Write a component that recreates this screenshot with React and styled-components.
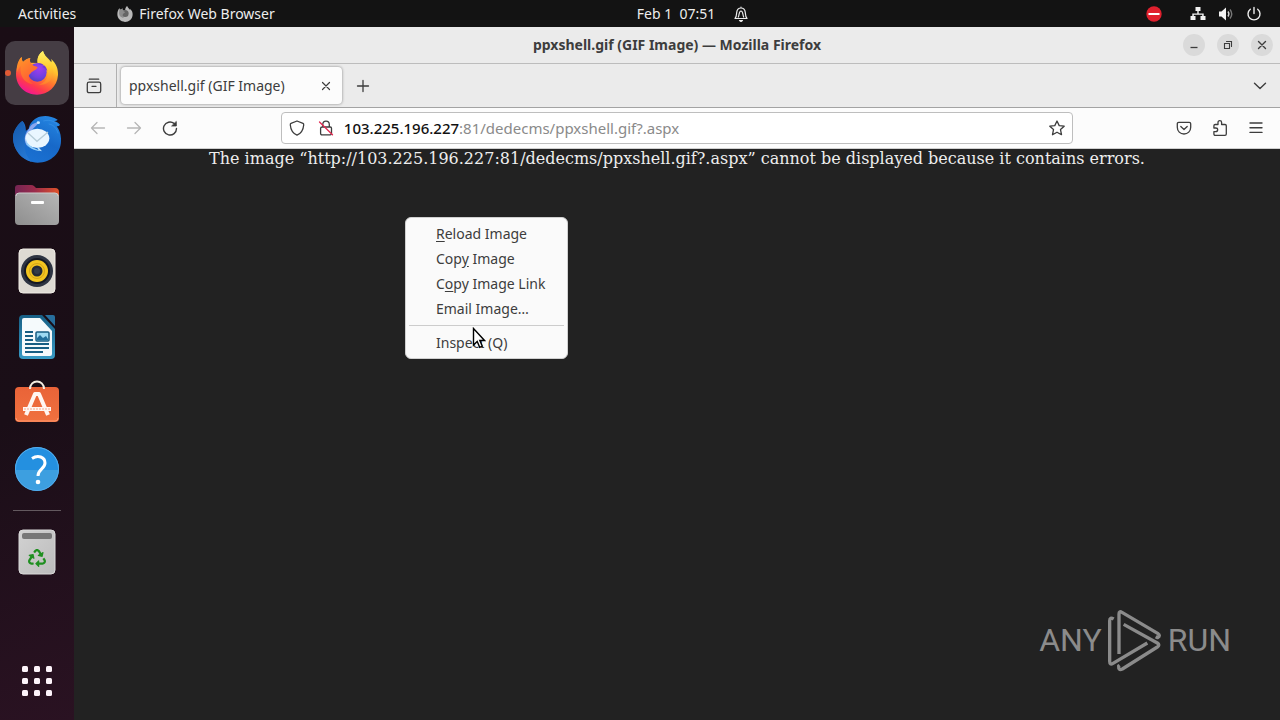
import React from "react";
import styled, { createGlobalStyle } from "styled-components";
import { FaRecycle } from "react-icons/fa";

const UI_FONT = `"Noto Sans", "Open Sans", sans-serif`;

const GlobalStyle = createGlobalStyle`
  * {
    box-sizing: border-box;
  }

  body {
    margin: 0;
    background: #222222;
    font-family: ${UI_FONT};
    font-size: 14px;
  }

  button,
  input {
    font: inherit;
    color: inherit;
  }
`;

const Desktop = styled.div`
  display: flex;
  flex-direction: column;
  min-height: 100vh;
`;

const TopBar = styled.header`
  display: grid;
  grid-template-columns: 6fr auto 5fr;
  align-items: center;
  height: 27px;
  background: #131313;
  color: #ededed;
`;

const TopGroup = styled.div`
  display: flex;
  align-items: center;
  justify-content: ${props => (props.$end ? "flex-end" : "flex-start")};
  gap: ${props => props.$gap || 0}px;
  padding: 0 18px;
`;

const TopButton = styled.button`
  display: flex;
  align-items: center;
  gap: ${props => props.$gap || 0}px;
  padding: 0;
  border: 0;
  background: none;
  line-height: 20px;
  white-space: pre;

  svg {
    display: block;
  }
`;

const Workspace = styled.div`
  display: flex;
  flex: 1;
`;

const Dock = styled.nav`
  display: flex;
  flex-direction: column;
  align-items: center;
  gap: 2px;
  width: 74px;
  flex-shrink: 0;
  padding: 14px 0 7px;
  background: linear-gradient(160deg, #1a0d15 0%, #1a0e17 55%, #2a1222 100%);
`;

const DockButton = styled.button`
  position: relative;
  display: flex;
  align-items: center;
  justify-content: center;
  width: 64px;
  height: 64px;
  padding: 0;
  border: 0;
  border-radius: 10px;
  background: ${props => (props.$active ? "#453d44" : "transparent")};
`;

const RunningDot = styled.span`
  position: absolute;
  left: 0;
  width: 6px;
  height: 6px;
  border-radius: 50%;
  background: #e05a34;
`;

const DockDivider = styled.hr`
  width: 48px;
  height: 1px;
  margin: 7px 0;
  border: 0;
  background: #63595f;
`;

const Filler = styled.div`
  flex: 1;
`;

const Window = styled.main`
  display: flex;
  flex: 1;
  flex-direction: column;
  min-width: 0;
`;

const TitleBar = styled.div`
  display: grid;
  grid-template-columns: 1fr auto 1fr;
  align-items: center;
  height: 37px;
  padding: 0 7px;
  border-bottom: 1px solid #bcbcbc;
  background: #ebebeb;
`;

const Title = styled.h1`
  grid-column: 2;
  margin: 0;
  font-size: 14px;
  font-weight: 700;
  line-height: 20px;
  color: #3d3d3d;
`;

const WindowButtons = styled.div`
  display: flex;
  justify-content: flex-end;
  gap: 12px;
`;

const WindowButton = styled.button`
  display: flex;
  align-items: center;
  justify-content: center;
  width: 22px;
  height: 22px;
  padding: 0;
  border: 0;
  border-radius: 50%;
  background: #dadada;
  color: #3d3d3d;
`;

const TabStrip = styled.div`
  display: flex;
  align-items: center;
  height: 44px;
  padding-right: 4px;
  border-bottom: 1px solid #a3a3a3;
  background: #ebebeb;
`;

const RecentCell = styled.div`
  display: flex;
  align-items: center;
  align-self: stretch;
  padding: 0 6px 0 4px;
  border-right: 1px solid #b0b0b0;
`;

const Tab = styled.div`
  display: flex;
  align-items: center;
  width: 221px;
  height: 37px;
  margin: 0 5px 0 4px;
  padding: 0 4px 0 8px;
  border-radius: 4px;
  background: #fcfcfc;
  box-shadow: 0 0 3px rgba(0, 0, 0, 0.45);
`;

const TabLabel = styled.span`
  flex: 1;
  overflow: hidden;
  line-height: 20px;
  white-space: nowrap;
  color: #3d3d3d;
`;

const IconButton = styled.button`
  display: flex;
  align-items: center;
  justify-content: center;
  width: ${props => props.$size || 32}px;
  height: ${props => props.$size || 32}px;
  padding: 0;
  border: 0;
  border-radius: 4px;
  background: none;
  color: ${props => (props.disabled ? "#b6b6b6" : "#3d3d3d")};
`;

const NavBar = styled.div`
  display: flex;
  align-items: center;
  height: 41px;
  padding: 0 8px;
  border-bottom: 1px solid #cfcfcf;
  background: #fcfcfc;
`;

const NavGroup = styled.div`
  display: flex;
  gap: 4px;
`;

const Spring = styled.div`
  flex: 12;
`;

const AddressBar = styled.form`
  display: flex;
  flex: 100;
  align-items: center;
  height: 32px;
  border: 1px solid #bebebe;
  border-radius: 4px;
  background: #ffffff;
  font-size: 15px;
`;

const Host = styled.label`
  margin-left: 4px;
  font-weight: 500;
  line-height: 20px;
  color: #111111;
`;

const PathInput = styled.input`
  flex: 1;
  min-width: 0;
  padding: 0;
  border: 0;
  outline: 0;
  background: none;
  line-height: 20px;
  color: #8a8a8a;
`;

const Page = styled.section`
  position: relative;
  flex: 1;
  background: #222222;
`;

const ErrorText = styled.p`
  margin: 0;
  font-family: "DejaVu Serif", serif;
  font-size: 16px;
  line-height: 19px;
  text-align: center;
  color: #eeeeee;
`;

const ContextMenu = styled.div`
  position: absolute;
  top: 68px;
  left: 331px;
  width: 163px;
  padding: 3px;
  border: 1px solid #d0d0d0;
  border-radius: 6px;
  background: #fafafa;
`;

const MenuItem = styled.button`
  display: block;
  width: 100%;
  height: 25px;
  padding: 0 0 0 27px;
  border: 0;
  background: none;
  line-height: 24px;
  text-align: left;
  white-space: nowrap;
  color: #3d3d3d;

  u {
    text-underline-offset: 2px;
  }
`;

const MenuDivider = styled.hr`
  height: 1px;
  margin: 4px 0;
  border: 0;
  background: #cccccc;
`;

const Pointer = styled.svg`
  position: absolute;
  top: 109px;
  left: 66px;
`;

const Watermark = styled.div`
  position: absolute;
  right: 49px;
  bottom: 48px;
  display: flex;
  align-items: center;
  gap: 5px;
  font-family: Roboto, "Liberation Sans", sans-serif;
  font-size: 32px;
  line-height: 64px;
  color: #8b8b8b;
`;

const FirefoxIcon = () => (
  <svg width="44" height="44" viewBox="0 0 132 132" aria-hidden="true">
    <defs>
      <linearGradient id="fxBody" x1="0.8" y1="0.05" x2="0.3" y2="1">
        <stop offset="0" stopColor="#fff44f" />
        <stop offset="0.3" stopColor="#ffc22e" />
        <stop offset="0.55" stopColor="#ff7b2d" />
        <stop offset="0.78" stopColor="#ff3a4c" />
        <stop offset="1" stopColor="#f0139b" />
      </linearGradient>
      <linearGradient id="fxFlame" x1="0.5" y1="0" x2="0.5" y2="1">
        <stop offset="0" stopColor="#fff36a" />
        <stop offset="0.5" stopColor="#ffcb2f" />
        <stop offset="1" stopColor="#ff7b2d" />
      </linearGradient>
      <linearGradient id="fxEar" x1="0" y1="0" x2="0.6" y2="1">
        <stop offset="0" stopColor="#ff9a26" />
        <stop offset="1" stopColor="#ff5a35" />
      </linearGradient>
      <radialGradient id="fxGlobe" cx="0.6" cy="0.3" r="0.8">
        <stop offset="0" stopColor="#a03df0" />
        <stop offset="0.6" stopColor="#7040df" />
        <stop offset="1" stopColor="#4b3fb5" />
      </radialGradient>
    </defs>
    <path d="M20 18 C20 25 21 29 24 33 C31 26 38 22 46 21 C43 26 43 30 45 35 L68 36 C66 22 72 8 84 0 C87 14 100 20 109 34 C110 30 110 27 108 23 C124 38 130 54 129 72 C127 107 99 131 66 131 C30 131 3 104 3 69 C3 58 6 48 10 42 C10 32 14 24 20 18Z" fill="url(#fxBody)" />
    <path d="M84 0 C70 9 66 22 68 36 C82 36 96 46 98 64 C100 82 90 95 72 101 C97 104 115 86 115 64 C116 36 90 24 84 0Z" fill="url(#fxFlame)" />
    <circle cx="67" cy="64" r="28" fill="url(#fxGlobe)" />
    <path d="M68 36 C82 36 95 45 97 61 C92 54 88 50 82 48 C85 46 86 44 86 42 C80 43 73 42 68 36Z" fill="#713bd4" />
    <path d="M20 18 C20 25 21 29 24 33 C31 26 38 22 46 21 C43 30 46 36 54 43 C58 46 66 47 68 49 C67 55 59 58 52 62 C48 64 47 68 42 72 C38 80 43 91 54 99 C35 99 18 82 17 60 C16 53 18 48 21 43 C14 48 9 54 6 64 C3 46 9 28 20 18Z" fill="url(#fxEar)" />
  </svg>
);

const FirefoxMono = () => (
  <svg width="16" height="16" viewBox="0 0 132 132" aria-hidden="true">
    <path d="M20 18 L26 31 L46 21 L45 35 L68 36 C66 22 72 8 84 0 C87 14 100 20 109 34 L108 23 C124 38 130 54 129 72 C127 107 99 131 66 131 C30 131 3 104 3 69 C3 48 8 30 20 18Z" fill="#b9b9b9" />
    <circle cx="67" cy="62" r="29" fill="#666666" />
    <path d="M20 18 L26 31 L46 21 C43 34 52 45 68 49 C67 57 50 58 48 70 C44 84 48 92 58 98 C30 98 12 78 18 48Z" fill="#8c8c8c" />
  </svg>
);

const ThunderbirdIcon = () => (
  <svg width="48" height="48" viewBox="0 0 144 144" aria-hidden="true">
    <defs>
      <linearGradient id="tbBody" x1="0.8" y1="0" x2="0.3" y2="1">
        <stop offset="0" stopColor="#2586e2" />
        <stop offset="0.5" stopColor="#1768c8" />
        <stop offset="1" stopColor="#1b72d3" />
      </linearGradient>
      <linearGradient id="tbWing" x1="0" y1="0" x2="0.4" y2="1">
        <stop offset="0" stopColor="#1458aa" />
        <stop offset="1" stopColor="#2577d2" />
      </linearGradient>
    </defs>
    <path d="M28 18 C13 30 0 48 0 70 C2 112 34 143 74 143 C115 143 144 113 144 78 C145 60 139 44 131 34 C136 34 139 32 141 29 C136 23 129 20 123 18 C127 18 131 17 134 14 C112 1 89 0 71 9 C56 17 50 28 47 41 L38 48 C39 38 37 26 28 18Z" fill="url(#tbBody)" />
    <path d="M28 18 C13 30 0 48 0 70 C2 105 25 132 57 141 C42 126 32 107 36 86 C42 63 37 31 28 18Z" fill="url(#tbWing)" />
    <path d="M48 41 C55 26 66 24 77 22 C71 34 62 38 53 48 C38 62 38 82 46 96 C29 80 34 56 48 41Z" fill="#8ba7ef" />
    <ellipse cx="73" cy="70" rx="36" ry="29" fill="#e9f6ff" />
    <path d="M39 72 C41 89 60 100 85 108 C75 108 65 106 56 101 C43 94 36 84 39 72Z" fill="#95d0fa" />
    <path d="M72 96 C74 104 78 107 87 109 L76 96Z" fill="#c6e7ff" />
    <path d="M45 54 L72 79 L105 51" fill="none" stroke="#b7cdd8" strokeWidth="4" />
    <ellipse cx="76" cy="23" rx="5" ry="4" fill="#c7e8ff" />
    <path d="M91 18 C111 12 127 20 136 32 M107 27 C123 29 132 42 135 55" fill="none" stroke="#4ba2f0" strokeWidth="3" opacity="0.4" />
  </svg>
);

const FilesIcon = () => (
  <svg width="46" height="42" viewBox="0 0 46 42" aria-hidden="true">
    <defs>
      <linearGradient id="filesBack" x1="0" y1="0" x2="1" y2="0">
        <stop offset="0" stopColor="#742553" />
        <stop offset="0.45" stopColor="#9b2b4b" />
        <stop offset="1" stopColor="#e0532a" />
      </linearGradient>
      <linearGradient id="filesFront" x1="0" y1="1" x2="1" y2="0">
        <stop offset="0" stopColor="#8e8e8e" />
        <stop offset="1" stopColor="#b6b6b6" />
      </linearGradient>
    </defs>
    <path d="M1 24V4Q1 1 4 1H17Q19 1 20 2L22 4H41Q45 4 45 8V24Z" fill="url(#filesBack)" />
    <rect x="1" y="9" width="44" height="32" rx="4" fill="url(#filesFront)" />
    <path d="M2 12Q2 9 5 9H41Q44 9 44 12" fill="none" stroke="#cccccc" />
    <rect x="17" y="17" width="13" height="3" rx="1" fill="#ffffff" />
  </svg>
);

const RhythmboxIcon = () => (
  <svg width="38" height="46" viewBox="0 0 38 46" aria-hidden="true">
    <rect x="1" y="1" width="36" height="44" rx="4" fill="#dedad3" stroke="#f0ece5" />
    <circle cx="19" cy="23" r="16" fill="#2e3442" />
    <circle cx="19" cy="23" r="13" fill="#151823" />
    <circle cx="19" cy="23" r="11" fill="#f3c51f" />
    <circle cx="19" cy="23" r="7.5" fill="none" stroke="#d5a41a" />
    <circle cx="19" cy="23" r="5.5" fill="#252a35" />
    <circle cx="19" cy="23" r="3" fill="#343b49" />
  </svg>
);

const WriterIcon = () => (
  <svg width="38" height="46" viewBox="0 0 38 46" aria-hidden="true">
    <defs>
      <linearGradient id="writer" x1="0" y1="0" x2="0" y2="1">
        <stop offset="0" stopColor="#175f85" />
        <stop offset="1" stopColor="#389bc5" />
      </linearGradient>
    </defs>
    <path d="M5 1H24L37 15V41Q37 45 33 45H5Q1 45 1 41V5Q1 1 5 1Z" fill="url(#writer)" />
    <path d="M27 1H35Q37 1 37 3V12Z" fill="#276f9d" />
    <path d="M6 4H22L34 17V40Q34 42 32 42H6Q4 42 4 40V6Q4 4 6 4Z" fill="#f5fafc" />
    <path d="M7 18H15M7 22H15M7 26H15M7 30H31M7 34H31M7 38H25" stroke="#175e83" strokeWidth="2" />
    <rect x="18" y="18" width="13" height="9" rx="1" fill="#9edaf2" stroke="#175e83" strokeWidth="1.5" />
    <path d="M19 26V24L22 21L25 24L28 22L30 25V26Z" fill="#226f9b" />
  </svg>
);

const SoftwareIcon = () => (
  <svg width="46" height="46" viewBox="0 2 46 46" aria-hidden="true">
    <defs>
      <linearGradient id="software" x1="0" y1="0" x2="0" y2="1">
        <stop offset="0" stopColor="#e96338" />
        <stop offset="1" stopColor="#f0713f" />
      </linearGradient>
    </defs>
    <rect x="1" y="9" width="44" height="35" rx="4" fill="url(#software)" />
    <path d="M2 40Q2 43 5 43H41Q44 43 44 40" fill="none" stroke="#ff9a70" />
    <path d="M16 11C16 1 30 1 30 11" fill="none" stroke="#f4eee2" strokeWidth="2" />
    <path d="M12 37L21 16H25L34 37M9 31H37" fill="none" stroke="#fff6f2" strokeWidth="4" strokeLinejoin="round" />
    <path d="M10 31H36" stroke="#f4a98d" strokeDasharray="2 1" />
  </svg>
);

const HelpIcon = () => (
  <svg width="46" height="46" viewBox="0 0 46 46" aria-hidden="true">
    <circle cx="23" cy="23" r="22" fill="#3d9fe0" />
    <path d="M1 24A22 22 0 0 1 45 24Z" fill="#2490e0" />
    <circle cx="23" cy="23" r="21.5" fill="none" stroke="#51acee" />
    <path d="M18 12.500C24 8.500 31 11 31 17C31 23 24 23 24 30" fill="none" stroke="#ffffff" strokeWidth="3" />
    <circle cx="24" cy="36" r="2.300" fill="#ffffff" />
  </svg>
);

const TrashIcon = () => (
  <svg width="38" height="46" viewBox="0 0 38 46" aria-hidden="true">
    <defs>
      <linearGradient id="trash" x1="0" y1="0" x2="1" y2="1">
        <stop offset="0" stopColor="#d2d2d2" />
        <stop offset="1" stopColor="#bcbcbc" />
      </linearGradient>
    </defs>
    <rect x="1" y="1" width="36" height="44" rx="4" fill="url(#trash)" stroke="#d9d9d9" />
    <rect x="4" y="4" width="30" height="6" rx="2" fill="#777777" />
    <FaRecycle x="10" y="20" size={18} color="#1f8f20" />
  </svg>
);

const AppsIcon = () => (
  <svg width="30" height="30" viewBox="0 0 30 30" fill="#fdf4fa" aria-hidden="true">
    {[0, 12, 24].map(y =>
      [0, 12, 24].map(x => <rect key={`${x}-${y}`} x={x} y={y} width="6" height="6" rx="1.500" />)
    )}
  </svg>
);

const Glyph = ({ size = 16, width = 1.3, children }) => (
  <svg
    width={size}
    height={size}
    viewBox="0 0 16 16"
    fill="none"
    stroke="currentColor"
    strokeWidth={width}
    strokeLinecap="round"
    strokeLinejoin="round"
    aria-hidden="true"
  >
    {children}
  </svg>
);

const dockApps = [
  { name: "Firefox Web Browser", Icon: FirefoxIcon, active: true },
  { name: "Thunderbird Mail", Icon: ThunderbirdIcon },
  { name: "Files", Icon: FilesIcon },
  { name: "Rhythmbox", Icon: RhythmboxIcon },
  { name: "LibreOffice Writer", Icon: WriterIcon },
  { name: "Ubuntu Software", Icon: SoftwareIcon },
  { name: "Help", Icon: HelpIcon }
];

const SystemBar = () => (
  <TopBar>
    <TopGroup $gap={41}>
      <TopButton>Activities</TopButton>
      <TopButton $gap={6}>
        <FirefoxMono />
        Firefox Web Browser
      </TopButton>
    </TopGroup>
    <TopButton $gap={18}>
      {"Feb 1  07:51"}
      <Glyph width={1.2}>
        <path d="M2 12.500H14C12.500 11 12.500 9.500 12.300 6.500C12 3.500 10.500 2 8 2C5.500 2 4 3.500 3.700 6.500C3.500 9.500 3.500 11 2 12.500ZM5.300 11C6.300 9.500 5.800 5 8 5C10.200 5 9.700 9.500 10.700 11M8 1V2" />
        <path d="M6.500 14.500H9.500L8 15.500Z" fill="currentColor" />
      </Glyph>
    </TopButton>
    <TopGroup $end $gap={28}>
      <TopButton aria-label="Recording">
        <svg width="16" height="16" viewBox="0 0 16 16">
          <circle cx="8" cy="8" r="7.700" fill="#e0202e" />
          <rect x="2.500" y="7" width="11" height="2" fill="#ffffff" />
        </svg>
      </TopButton>
      <TopButton $gap={12} aria-label="System">
        <svg width="16" height="16" viewBox="0 0 16 16" fill="#f2f2f2">
          <path d="M5.500 1H10.500V5H8.700V7.500H13.700V10H15.500V14H10.500V10H12.200V8.800H3.800V10H5.500V14H0.500V10H2.300V7.500H7.300V5H5.500Z" />
        </svg>
        <svg width="16" height="16" viewBox="0 0 16 16" fill="none">
          <path d="M1 5.500H3.500L8 1.500V14.500L3.500 10.500H1Z" fill="#f2f2f2" />
          <path d="M10 5.500Q11.800 8 10 10.500" stroke="#d0d0d0" strokeWidth="1.400" />
          <path d="M12 3.500Q15.500 8 12 12.500" stroke="#777777" strokeWidth="1.400" />
        </svg>
        <Glyph width={1.4}>
          <path d="M8 1.500V7.500M4.300 3.200A6 6 0 1 0 11.700 3.200" />
        </Glyph>
      </TopButton>
    </TopGroup>
  </TopBar>
);

const BrowserTabs = () => (
  <TabStrip>
    <RecentCell>
      <IconButton aria-label="Recent browsing">
        <Glyph>
          <path d="M3.300 1.200H12.700M3 4.200H13Q14.700 4.200 14.700 6V13Q14.700 14.700 13 14.700H3Q1.300 14.700 1.300 13V6Q1.300 4.200 3 4.200ZM6 8.300H10" />
        </Glyph>
      </IconButton>
    </RecentCell>
    <Tab>
      <TabLabel>ppxshell.gif (GIF Image)</TabLabel>
      <IconButton $size={24} aria-label="Close tab">
        <Glyph width={1.2}>
          <path d="M4.500 4.500L11.500 11.500M11.500 4.500L4.500 11.500" />
        </Glyph>
      </IconButton>
    </Tab>
    <IconButton aria-label="New tab">
      <Glyph>
        <path d="M8 2.500V13.500M2.500 8H13.500" />
      </Glyph>
    </IconButton>
    <Filler />
    <IconButton aria-label="List all tabs">
      <Glyph width={1.4}>
        <path d="M2.500 5.300L8 10.500L13.500 5.300" />
      </Glyph>
    </IconButton>
  </TabStrip>
);

const Navigation = () => (
  <NavBar>
    <NavGroup>
      <IconButton disabled aria-label="Back">
        <Glyph>
          <path d="M14.500 8H1.500M7 2.500L1.500 8L7 13.500" />
        </Glyph>
      </IconButton>
      <IconButton disabled aria-label="Forward">
        <Glyph>
          <path d="M1.500 8H14.500M9 2.500L14.500 8L9 13.500" />
        </Glyph>
      </IconButton>
      <IconButton aria-label="Reload">
        <Glyph width={1.4}>
          <path d="M14.500 8.500A6.500 6.500 0 1 1 12 3.400L13.500 5" />
          <path d="M14.300 1.800V6H10Z" fill="currentColor" strokeWidth="0.800" />
        </Glyph>
      </IconButton>
    </NavGroup>
    <Spring />
    <AddressBar onSubmit={event => event.preventDefault()}>
      <IconButton type="button" $size={30} aria-label="Tracking protection">
        <Glyph>
          <path d="M8 1L14 3.300Q14.800 3.600 14.700 5C14.300 9.500 12 13.500 8 15.200C4 13.500 1.700 9.500 1.300 5Q1.200 3.600 2 3.300Z" />
        </Glyph>
      </IconButton>
      <IconButton type="button" $size={28} aria-label="Connection not secure">
        <Glyph>
          <path d="M4.200 7H12.200Q13.500 7 13.500 8.300V13.500Q13.500 14.800 12.200 14.800H4Q2.600 14.800 2.600 13.500V8.300Q2.600 7 4.200 7ZM4.800 7V4.500Q4.800 1.200 8 1.200Q11.300 1.200 11.300 4.500V7" />
          <path d="M1.500 2L14.500 14.800" stroke="#e22850" />
        </Glyph>
      </IconButton>
      <Host htmlFor="address">103.225.196.227</Host>
      <PathInput id="address" defaultValue=":81/dedecms/ppxshell.gif?.aspx" />
      <IconButton type="button" $size={30} aria-label="Bookmark this page">
        <Glyph>
          <path d="M8 1L10.200 5.600L15.200 6.200L11.500 9.600L12.500 14.700L8 12.200L3.500 14.700L4.500 9.600L0.800 6.200L5.800 5.600Z" />
        </Glyph>
      </IconButton>
    </AddressBar>
    <Spring />
    <NavGroup>
      <IconButton aria-label="Save to Pocket">
        <Glyph>
          <path d="M2.800 2.300H13.200Q14.700 2.300 14.700 3.800V7.300C14.700 11.300 11.800 14 8 14C4.200 14 1.300 11.300 1.300 7.300V3.800Q1.300 2.300 2.800 2.300ZM4.800 6.500L8 9.500L11.200 6.500" />
        </Glyph>
      </IconButton>
      <IconButton aria-label="Extensions">
        <Glyph>
          <path d="M6 4.500V2.500Q6 0.700 7.800 0.700Q9.600 0.700 9.600 2.500V4.500H13Q14.300 4.500 14.300 5.800V14Q14.300 15.300 13 15.300H3.200Q1.900 15.300 1.900 14V11.600H3.700Q5.700 11.600 5.700 9.800Q5.700 8 3.700 8H1.900V5.800Q1.900 4.500 3.200 4.500Z" />
        </Glyph>
      </IconButton>
      <IconButton aria-label="Menu">
        <Glyph width={1.4}>
          <path d="M2 3H14M2 7.700H14M2 12.400H14" />
        </Glyph>
      </IconButton>
    </NavGroup>
  </NavBar>
);

const App = () => (
  <Desktop>
    <GlobalStyle />
    <SystemBar />
    <Workspace>
      <Dock>
        {dockApps.map(({ name, Icon, active }) => (
          <DockButton key={name} $active={active} aria-label={name}>
            {active && <RunningDot />}
            <Icon />
          </DockButton>
        ))}
        <DockDivider />
        <DockButton aria-label="Trash">
          <TrashIcon />
        </DockButton>
        <Filler />
        <DockButton aria-label="Show Applications">
          <AppsIcon />
        </DockButton>
      </Dock>
      <Window>
        <TitleBar>
          <Title>ppxshell.gif (GIF Image) — Mozilla Firefox</Title>
          <WindowButtons>
            <WindowButton aria-label="Minimize">
              <Glyph>
                <path d="M4.500 10.500H11.500" strokeLinecap="butt" />
              </Glyph>
            </WindowButton>
            <WindowButton aria-label="Restore">
              <Glyph width={1.1}>
                <path d="M4.500 6.500H9.500V11.500H4.500ZM6.500 4.500H11.500V9.500" strokeLinejoin="miter" />
              </Glyph>
            </WindowButton>
            <WindowButton aria-label="Close">
              <Glyph width={1.4}>
                <path d="M4.500 4.500L11.500 11.500M11.500 4.500L4.500 11.500" />
              </Glyph>
            </WindowButton>
          </WindowButtons>
        </TitleBar>
        <BrowserTabs />
        <Navigation />
        <Page>
          <ErrorText>
            The image “http://103.225.196.227:81/dedecms/ppxshell.gif?.aspx” cannot be displayed because it contains errors.
          </ErrorText>
          <ContextMenu>
            <MenuItem><u>R</u>eload Image</MenuItem>
            <MenuItem>Cop<u>y</u> Image</MenuItem>
            <MenuItem>C<u>o</u>py Image Link</MenuItem>
            <MenuItem>Email Image…</MenuItem>
            <MenuDivider />
            <MenuItem>Inspect (Q)</MenuItem>
            <Pointer width="14" height="22" viewBox="0 0 14 22" aria-hidden="true">
              <path d="M1.500 1.500V18L5.200 14.500L7.700 20.300L10.300 19.200L7.800 13.500H12.500Z" fill="#ffffff" stroke="#000000" strokeWidth="1.400" />
            </Pointer>
          </ContextMenu>
          <Watermark>
            <span>ANY</span>
            <svg width="56" height="64" viewBox="30 24 168 192" fill="none" stroke="#8b8b8b" strokeWidth="10" strokeLinejoin="round" strokeLinecap="butt" aria-hidden="true">
              <path d="M66 162V42Q66 32 75 37L182 100Q192 107 182 113L176 110" />
              <path d="M80 73L181 129Q190 135 181 141L76 207Q64 213 65 198L68 196" />
              <path d="M50 57Q38 50 38 62V184Q38 196 48 190L151 129" />
            </svg>
            <span>RUN</span>
          </Watermark>
        </Page>
      </Window>
    </Workspace>
  </Desktop>
);

export default App;
